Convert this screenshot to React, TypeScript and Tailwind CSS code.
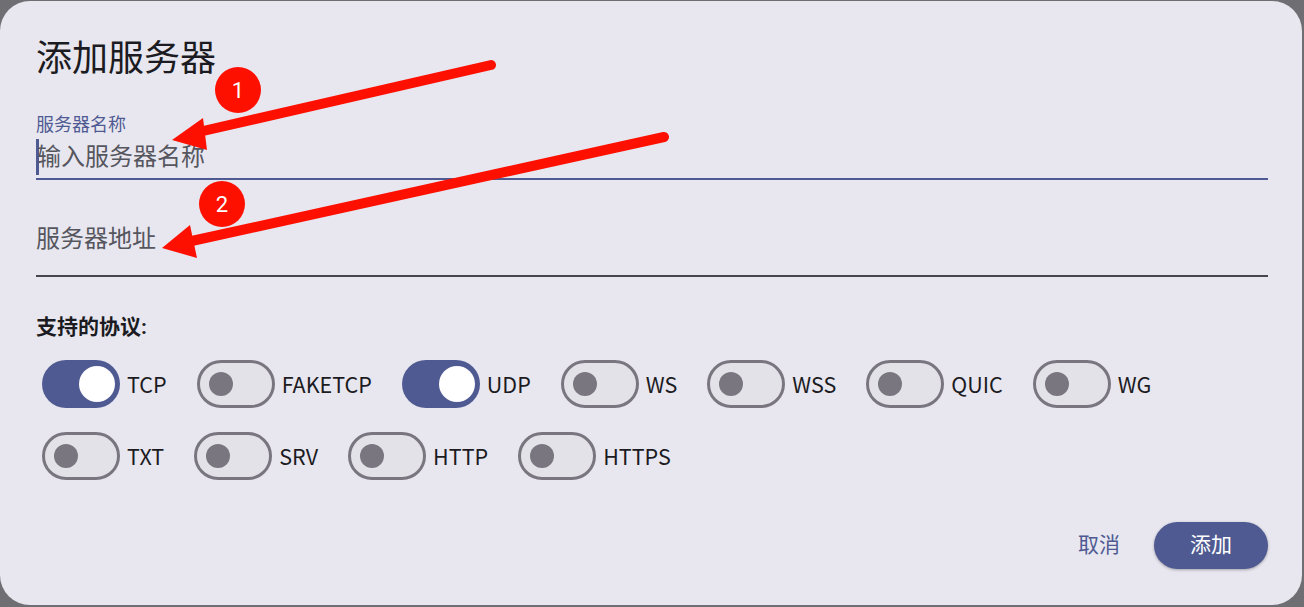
const protocolsRow1 = [
  { name: "TCP", on: true },
  { name: "FAKETCP", on: false },
  { name: "UDP", on: true },
  { name: "WS", on: false },
  { name: "WSS", on: false },
  { name: "QUIC", on: false },
  { name: "WG", on: false },
];

const protocolsRow2 = [
  { name: "TXT", on: false },
  { name: "SRV", on: false },
  { name: "HTTP", on: false },
  { name: "HTTPS", on: false },
];

const Toggle = ({ name, on }: { name: string; on: boolean }) => {
  return (
    <div className="flex items-center">
      {on ? (
        <div className="flex h-[48px] w-[78px] items-center justify-end rounded-full bg-[#4f5a92] pr-[5px]">
          <div className="h-[36px] w-[36px] rounded-full bg-white" />
        </div>
      ) : (
        <div className="flex h-[48px] w-[78px] items-center rounded-full border-[3px] border-[#79767f] bg-[#e4e2e9] pl-[9px]">
          <div className="h-[24px] w-[24px] rounded-full bg-[#79767f]" />
        </div>
      )}
      <span
        className="ml-[7px] text-[21.5px] leading-none text-[#1b1b21]"
        style={{ fontFamily: '"Noto Sans CJK SC", sans-serif' }}
      >
        {name}
      </span>
    </div>
  );
};

const Annotations = () => {
  return (
    <svg className="pointer-events-none absolute inset-0" width="1304" height="607">
      {/* arrow 1 */}
      <line x1="491" y1="64" x2="190" y2="133" stroke="#fe1000" strokeWidth="10" strokeLinecap="round" />
      <polygon points="172,139 203,117 207,149" fill="#fe1000" />
      <circle cx="238" cy="89" r="23" fill="#fe1000" />
      <text x="238" y="97" textAnchor="middle" fill="white" fontSize="22" fontFamily="Roboto, sans-serif">1</text>
      {/* arrow 2 */}
      <line x1="664" y1="136" x2="178" y2="243" stroke="#fe1000" strokeWidth="10" strokeLinecap="round" />
      <polygon points="162,247 190,224 197,257" fill="#fe1000" />
      <circle cx="222" cy="203" r="23" fill="#fe1000" />
      <text x="222" y="211" textAnchor="middle" fill="white" fontSize="22" fontFamily="Roboto, sans-serif">2</text>
    </svg>
  );
};

const App = () => {
  return (
    <div
      className="h-[607px] w-[1304px] overflow-hidden bg-[#6e6e73] pt-[1px]"
      style={{ fontFamily: 'Roboto, "Noto Sans CJK SC", sans-serif' }}
    >
      <div className="relative flex h-[604px] w-[1302px] flex-col rounded-[30px] bg-[#e8e7f0] px-9 pt-[34px]">
        {/* 标题 */}
        <h1 className="text-[36px] leading-[48px] text-[#1b1b21]">添加服务器</h1>

        {/* 服务器名称 */}
        <div className="mt-[30px] w-[1232px]">
          <div className="text-[18px] leading-[24px] text-[#4f5a92]">服务器名称</div>
          <div className="mt-[2px] flex h-[36px] items-center">
            <div className="h-[36px] w-[3px] bg-[#4f5a92]" />
            <span className="-ml-[2px] text-[24px] leading-none text-[#56565e]">输入服务器名称</span>
          </div>
          <div className="mt-[3px] h-[2px] bg-[#4f5a92]" />
        </div>

        {/* 服务器地址 */}
        <div className="mt-[43px] w-[1232px]">
          <div className="text-[24px] leading-[32px] text-[#56565e]">服务器地址</div>
          <div className="mt-[20px] h-[2px] bg-[#45464f]" />
        </div>

        {/* 协议 */}
        <div className="mt-[36px] text-[21px] font-bold leading-[28px] text-[#1b1b21]">支持的协议:</div>
        <div className="mt-[19px] flex flex-col gap-[24px] pl-[6px]">
          <div className="flex gap-[30px]">
            {protocolsRow1.map((p) => (
              <Toggle key={p.name} name={p.name} on={p.on} />
            ))}
          </div>
          <div className="flex gap-[30px]">
            {protocolsRow2.map((p) => (
              <Toggle key={p.name} name={p.name} on={p.on} />
            ))}
          </div>
        </div>

        {/* 按钮 */}
        <div className="mt-[42px] flex w-[1232px] items-center justify-end gap-[34px]">
          <button className="text-[21px] text-[#4f5a92]">取消</button>
          <button className="h-[47px] w-[114px] rounded-full bg-[#4f5a92] text-[21px] text-white shadow-[0_1px_3px_rgba(0,0,0,0.3)]">
            添加
          </button>
        </div>

        <Annotations />
      </div>
    </div>
  );
};

export default App;
